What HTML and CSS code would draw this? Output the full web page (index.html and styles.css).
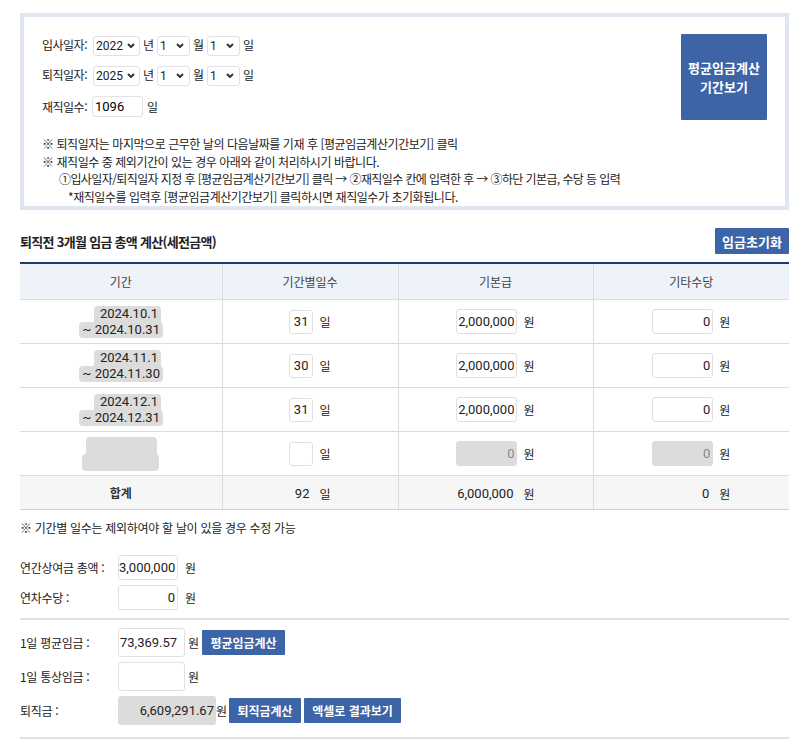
FILE: index.html
```html
<!DOCTYPE html>
<html lang="ko">
  <head>
    <meta charset="UTF-8">
    <title>퇴직금 계산</title>
    <link rel="stylesheet" href="styles.css">
  </head>
  <body>
    <div class="wrap">
      <div class="top-box">
        <div class="top-left">
          <div class="date-row">
            <span class="lbl">입사일자:</span>
            <span class="sel sel-year"><select><option>2022</option></select><svg viewBox="0 0 8 5"><path d="M1 1 L4 4 L7 1"/></svg></span>
            <span>년</span>
            <span class="sel sel-md"><select><option>1</option></select><svg viewBox="0 0 8 5"><path d="M1 1 L4 4 L7 1"/></svg></span>
            <span>월</span>
            <span class="sel sel-md"><select><option>1</option></select><svg viewBox="0 0 8 5"><path d="M1 1 L4 4 L7 1"/></svg></span>
            <span>일</span>
          </div>
          <div class="date-row">
            <span class="lbl">퇴직일자:</span>
            <span class="sel sel-year"><select><option>2025</option></select><svg viewBox="0 0 8 5"><path d="M1 1 L4 4 L7 1"/></svg></span>
            <span>년</span>
            <span class="sel sel-md"><select><option>1</option></select><svg viewBox="0 0 8 5"><path d="M1 1 L4 4 L7 1"/></svg></span>
            <span>월</span>
            <span class="sel sel-md"><select><option>1</option></select><svg viewBox="0 0 8 5"><path d="M1 1 L4 4 L7 1"/></svg></span>
            <span>일</span>
          </div>
          <div class="date-row days-row">
            <span class="lbl">재직일수:</span>
            <input class="days-total" type="text" value="1096">
            <span class="days-unit">일</span>
          </div>
          <div class="notes">
            <p>※ 퇴직일자는 마지막으로 근무한 날의 다음날짜를 기재 후 [평균임금계산기간보기] 클릭</p>
            <p>※ 재직일수 중 제외기간이 있는 경우 아래와 같이 처리하시기 바랍니다.</p>
            <p class="step">①입사일자/퇴직일자 지정 후 [평균임금계산기간보기] 클릭 → ②재직일수 칸에 입력한 후 → ③하단 기본급, 수당 등 입력</p>
            <p class="step2">*재직일수를 입력후 [평균임금계산기간보기] 클릭하시면 재직일수가 초기화됩니다.</p>
          </div>
        </div>
        <button class="btn period-btn">평균임금계산<br>기간보기</button>
      </div>

      <div class="title-row">
        <h3>퇴직전 3개월 임금 총액 계산(세전금액)</h3>
        <button class="btn reset-btn">임금초기화</button>
      </div>

      <table class="pay-table">
        <colgroup>
          <col style="width: 202px">
          <col style="width: 176px">
          <col style="width: 195px">
          <col style="width: 196px">
        </colgroup>
        <thead>
          <tr>
            <th>기간</th>
            <th>기간별일수</th>
            <th>기본급</th>
            <th>기타수당</th>
          </tr>
        </thead>
        <tbody>
          <tr>
            <td><div class="period"><span class="p1">2024.10.1</span><span class="p2">~ 2024.10.31</span></div></td>
            <td><div class="grp"><input class="in-day" type="text" value="31"><span>일</span></div></td>
            <td><div class="grp"><input class="in-amt" type="text" value="2,000,000"><span>원</span></div></td>
            <td><div class="grp"><input class="in-amt" type="text" value="0"><span>원</span></div></td>
          </tr>
          <tr>
            <td><div class="period"><span class="p1">2024.11.1</span><span class="p2">~ 2024.11.30</span></div></td>
            <td><div class="grp"><input class="in-day" type="text" value="30"><span>일</span></div></td>
            <td><div class="grp"><input class="in-amt" type="text" value="2,000,000"><span>원</span></div></td>
            <td><div class="grp"><input class="in-amt" type="text" value="0"><span>원</span></div></td>
          </tr>
          <tr>
            <td><div class="period"><span class="p1">2024.12.1</span><span class="p2">~ 2024.12.31</span></div></td>
            <td><div class="grp"><input class="in-day" type="text" value="31"><span>일</span></div></td>
            <td><div class="grp"><input class="in-amt" type="text" value="2,000,000"><span>원</span></div></td>
            <td><div class="grp"><input class="in-amt" type="text" value="0"><span>원</span></div></td>
          </tr>
          <tr>
            <td><div class="period"><span class="p1 empty1"></span><span class="p2 empty2"></span></div></td>
            <td><div class="grp"><input class="in-day" type="text" value=""><span>일</span></div></td>
            <td><div class="grp"><input class="in-amt off" type="text" value="0" disabled><span>원</span></div></td>
            <td><div class="grp"><input class="in-amt off" type="text" value="0" disabled><span>원</span></div></td>
          </tr>
        </tbody>
        <tfoot>
          <tr>
            <td class="sum-lbl">합계</td>
            <td><div class="grp"><span class="sum-day">92</span><span>일</span></div></td>
            <td><div class="grp"><span class="sum-amt">6,000,000</span><span>원</span></div></td>
            <td><div class="grp"><span class="sum-amt">0</span><span>원</span></div></td>
          </tr>
        </tfoot>
      </table>

      <p class="table-note">※ 기간별 일수는 제외하여야 할 날이 있을 경우 수정 가능</p>

      <div class="form">
        <div class="frow">
          <span class="flbl">연간상여금 총액 :</span>
          <input class="fin" type="text" value="3,000,000">
          <span class="unit">원</span>
        </div>
        <div class="frow">
          <span class="flbl">연차수당 :</span>
          <input class="fin" type="text" value="0">
          <span class="unit">원</span>
        </div>
      </div>
      <div class="sep"></div>
      <div class="form form2">
        <div class="frow tall">
          <span class="flbl">1일 평균임금 :</span>
          <input class="fin wide left" type="text" value="73,369.57">
          <span class="unit u2">원</span>
          <button class="btn small-btn avg-btn">평균임금계산</button>
        </div>
        <div class="frow tall">
          <span class="flbl">1일 통상임금 :</span>
          <input class="fin wide" type="text" value="">
          <span class="unit u2">원</span>
        </div>
        <div class="frow tall">
          <span class="flbl">퇴직금 :</span>
          <span class="result">6,609,291.67</span>
          <span class="unit u3">원</span>
          <button class="btn small-btn calc-btn">퇴직금계산</button>
          <button class="btn small-btn excel-btn">엑셀로 결과보기</button>
        </div>
      </div>
      <div class="sep bottom"></div>
    </div>
  </body>
</html>
```
FILE: styles.css
```css
body {
  margin: 0;
  font-family: "Noto Sans CJK KR", "Noto Sans", sans-serif;
  font-size: 12px;
  color: #222;
}

p {
  margin: 0;
}

.wrap {
  width: 769px;
  margin-left: 20px;
  padding-top: 13px;
}

.btn {
  font-family: "Noto Sans CJK KR", sans-serif;
  font-weight: bold;
  color: #fff;
  background-color: #3d64a6;
  border: none;
  border-radius: 1px;
  padding: 0;
  cursor: pointer;
}

/* 상단 날짜 영역 */
.top-box {
  display: flex;
  justify-content: space-between;
  border: 4px solid #dfe5f1;
  padding: 17px 18px 1px 18px;
}

.top-left {
  padding-top: 1px;
}

.date-row {
  display: flex;
  align-items: center;
  gap: 3px;
  height: 20px;
  margin-bottom: 10px;
  line-height: 20px;
}

.days-row {
  height: 21px;
  margin-top: 11px;
}

.lbl {
  width: 48px;
  letter-spacing: -0.5px;
  white-space: nowrap;
}

.sel {
  position: relative;
  display: inline-block;
  height: 20px;
}

.sel select {
  -webkit-appearance: none;
  appearance: none;
  width: 100%;
  height: 20px;
  box-sizing: border-box;
  font-family: Roboto, sans-serif;
  font-size: 12px;
  border: 1px solid #e2e2e2;
  border-radius: 3px;
  background: #fff;
  color: #222;
  padding: 0 0 0 2px;
  outline: none;
}

.sel svg {
  position: absolute;
  top: 8px;
  width: 8px;
  height: 5px;
  fill: none;
  stroke: #333;
  stroke-width: 2;
  pointer-events: none;
}

.sel-year {
  width: 47px;
}

.sel-year svg {
  right: 5px;
}

.sel-md {
  width: 33px;
}

.sel-md svg {
  right: 6px;
}

.days-total {
  width: 51px;
  height: 21px;
  box-sizing: border-box;
  margin-left: -1px;
  border: 1px solid #e2e2e2;
  border-radius: 3px;
  font-family: Roboto, sans-serif;
  font-size: 13px;
  padding: 0 2px;
  outline: none;
}

.days-unit {
  margin-left: 1px;
}

.notes {
  margin-top: 18px;
  line-height: 17.5px;
  letter-spacing: -0.45px;
  white-space: nowrap;
}

.notes .step {
  padding-left: 17px;
  letter-spacing: -0.6px;
}

.notes .step2 {
  padding-left: 26px;
}

.period-btn {
  width: 86px;
  height: 86px;
  font-size: 13px;
  line-height: 19px;
}

/* 3개월 임금 */
.title-row {
  display: flex;
  justify-content: space-between;
  align-items: center;
  height: 26px;
  margin-top: 18px;
}

.title-row h3 {
  margin: 0;
  font-size: 13px;
  letter-spacing: -0.7px;
}

.reset-btn {
  width: 74px;
  height: 26px;
  font-size: 13px;
}

.pay-table {
  width: 769px;
  margin-top: 8px;
  table-layout: fixed;
  border-collapse: collapse;
  border-top: 2px solid #1f3a68;
}

.pay-table th {
  height: 35px;
  background-color: #eef3fa;
  font-weight: normal;
  color: #444;
  border-bottom: 1px solid #dcdcdc;
  border-left: 1px solid #dcdcdc;
  padding: 0;
}

.pay-table td {
  height: 43px;
  padding: 0;
  text-align: center;
  border-bottom: 1px solid #dcdcdc;
  border-left: 1px solid #dcdcdc;
}

.pay-table th:first-child,
.pay-table td:first-child {
  border-left: none;
}

.pay-table tfoot td {
  height: 33px;
  background-color: #f6f6f6;
  border-top: 1px solid #3d5a88;
  border-bottom: 1px solid #cfcfcf;
}

.sum-lbl {
  font-weight: bold;
  color: #333;
}

.period {
  display: inline-flex;
  flex-direction: column;
  align-items: flex-end;
  vertical-align: middle;
  line-height: 16px;
  font-family: Roboto, sans-serif;
  font-size: 13px;
}

.period span {
  background-color: #dcdcdc;
  padding: 0 3px 0 4px;
}

.period .p1 {
  border-radius: 4px 4px 0 0;
  margin-right: 2px;
  padding-left: 6px;
}

.period .p2 {
  border-radius: 4px;
}

.period .empty1 {
  width: 62px;
  height: 17px;
}

.period .empty2 {
  width: 70px;
  height: 17px;
}

.grp {
  display: inline-flex;
  align-items: center;
  gap: 6px;
  vertical-align: middle;
}

.grp input,
.fin {
  box-sizing: border-box;
  border: 1px solid #e0e0e0;
  border-radius: 3px;
  text-align: right;
  font-family: Roboto, sans-serif;
  font-size: 13px;
  color: #222;
  background: #fff;
  padding: 0 2px 0 0;
  outline: none;
}

.in-day {
  width: 24px;
  height: 24px;
}

.grp .in-day {
  padding-right: 4px;
}

.in-amt {
  width: 61px;
  height: 25px;
}

.grp input.off {
  background-color: #dcdcdc;
  border-color: #dcdcdc;
  color: #888;
}

.sum-day,
.sum-amt {
  box-sizing: border-box;
  text-align: right;
  padding-right: 4px;
  font-family: Roboto, sans-serif;
  font-size: 13px;
}

.sum-day {
  width: 24px;
}

.sum-amt {
  width: 61px;
}

.table-note {
  margin-top: 10px;
  line-height: 16px;
  letter-spacing: -0.3px;
}

/* 하단 입력 */
.form {
  margin-top: 19px;
  display: flex;
  flex-direction: column;
  gap: 5px;
}

.form2 {
  margin-top: 8px;
}

.frow {
  display: flex;
  align-items: center;
  height: 25px;
}

.frow.tall {
  height: 29px;
}

.flbl {
  width: 98px;
  letter-spacing: -0.3px;
  white-space: nowrap;
}

.fin {
  width: 60px;
  height: 25px;
}

.fin.wide {
  width: 67px;
  height: 29px;
}

.fin.left {
  text-align: left;
  padding-left: 1px;
}

.unit {
  margin-left: 7px;
}

.unit.u2 {
  margin-left: 3px;
}

.unit.u3 {
  margin-left: 0;
}

.result {
  box-sizing: border-box;
  width: 98px;
  height: 29px;
  line-height: 29px;
  padding-right: 2px;
  text-align: right;
  background-color: #dcdcdc;
  border-radius: 3px;
  font-family: Roboto, sans-serif;
  font-size: 13px;
}

.small-btn {
  height: 25px;
  font-size: 12px;
}

.avg-btn {
  width: 83px;
  margin-left: 3px;
}

.calc-btn {
  width: 72px;
  margin-left: 2px;
}

.excel-btn {
  width: 97px;
  margin-left: 3px;
}

.sep {
  margin-top: 8px;
  border-top: 2px solid #e0e0e0;
}

.sep.bottom {
  margin-top: 12px;
}
```
